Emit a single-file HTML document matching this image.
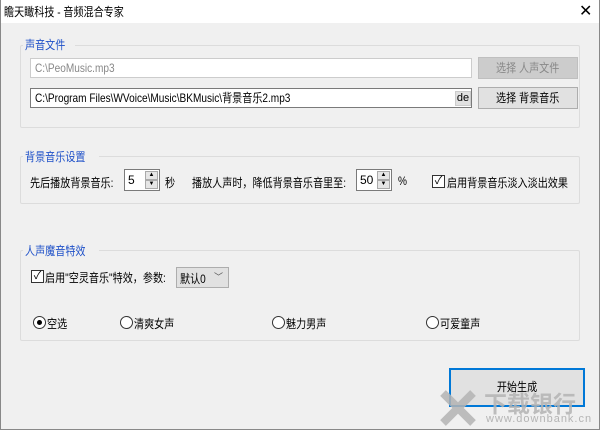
<!DOCTYPE html>
<html><head><meta charset="utf-8"><style>
*{margin:0;padding:0;box-sizing:border-box}
body{width:600px;height:430px;overflow:hidden;background:#f0f0f0;font-family:"Liberation Sans","Noto Sans CJK SC",sans-serif;font-size:12px;color:#000;position:relative}
.a{position:absolute}
.n{display:inline-block;transform:scaleX(.84);transform-origin:0 0;white-space:nowrap}
.win{left:0;top:0;width:600px;height:430px;border:1px solid #888;border-top:none}
.title{left:0;top:0;width:600px;height:23px;background:#fff;padding:3px 0 0 4px;font-size:12px}
.grp{border:1px solid #dcdcdc;border-radius:2px}
.leg{background:#f0f0f0;color:#1e50c8;padding:0 2px;font-size:12px;line-height:14px}
.inp{background:#fff;border:1px solid #a0a0a0;padding:2px 4px;line-height:14px;white-space:nowrap}
.btn{background:#e1e1e1;border:1px solid #adadad;text-align:center;line-height:20px}
.btn .n{transform-origin:50% 0}
.spin{background:#fff;border:1px solid #7a7a7a;}
.arr{position:absolute;right:1px;width:13px;height:9px;background:#e6e6e6;border:1px solid #aaa;font-size:6px;line-height:7px;text-align:center}
.chk{width:13px;height:13px;border:1px solid #333;background:#fff}
.rad{width:13px;height:13px;border:1px solid #333;border-radius:50%;background:#fff}
</style></head><body>
<div class="a title"><span class="n">瞻天瞰科技 - 音频混合专家</span></div>
<div class="a" style="left:579px;top:1px;font-size:16px">✕</div>
<div class="a win"></div>

<div class="a grp" style="left:20px;top:45px;width:560px;height:83px"></div>
<div class="a leg" style="left:23px;top:38px"><span class="n">声音文件</span></div>
<div class="a inp" style="left:30px;top:58px;width:442px;height:20px;color:#888;border-color:#ccc"><span class="n">C:\PeoMusic.mp3</span></div>
<div class="a btn" style="left:478px;top:57px;width:100px;height:22px;color:#888;background:#ccc;border-color:#bfbfbf"><span class="n">选择 人声文件</span></div>
<div class="a inp" style="left:30px;top:88px;width:442px;height:20px;border-color:#7a7a7a"><span class="n">C:\Program Files\WVoice\Music\BKMusic\背景音乐2.mp3</span></div>
<div class="a" style="left:455px;top:91px;width:16px;height:15px;background:#e1e1e1;border:1px solid #ccc;font-size:11px;text-align:center;line-height:13px">de</div>
<div class="a btn" style="left:478px;top:87px;width:100px;height:22px"><span class="n">选择 背景音乐</span></div>

<div class="a grp" style="left:20px;top:156px;width:560px;height:48px"></div>
<div class="a leg" style="left:23px;top:150px"><span class="n">背景音乐设置</span></div>
<div class="a" style="left:30px;top:174px"><span class="n">先后播放背景音乐:</span></div>
<div class="a spin" style="left:124px;top:169px;width:36px;height:22px"><span style="position:absolute;left:3px;top:3px">5</span><div class="arr" style="top:1px">▲</div><div class="arr" style="top:10px">▼</div></div>
<div class="a" style="left:165px;top:174px"><span class="n">秒</span></div>
<div class="a" style="left:192px;top:174px"><span class="n">播放人声时，降低背景音乐音里至:</span></div>
<div class="a spin" style="left:356px;top:169px;width:36px;height:22px"><span style="position:absolute;left:3px;top:3px">50</span><div class="arr" style="top:1px">▲</div><div class="arr" style="top:10px">▼</div></div>
<div class="a" style="left:398px;top:174px"><span class="n">%</span></div>
<div class="a chk" style="left:432px;top:175px;font-size:11px;line-height:11px;text-align:center">✓</div>
<div class="a" style="left:447px;top:174px"><span class="n">启用背景音乐淡入淡出效果</span></div>

<div class="a grp" style="left:20px;top:250px;width:560px;height:91px"></div>
<div class="a leg" style="left:23px;top:244px"><span class="n">人声魔音特效</span></div>
<div class="a chk" style="left:31px;top:270px;font-size:11px;line-height:11px;text-align:center">✓</div>
<div class="a" style="left:45px;top:269px"><span class="n">启用"空灵音乐"特效，参数:</span></div>
<div class="a" style="left:176px;top:267px;width:53px;height:21px;background:#e1e1e1;border:1px solid #adadad;padding:2px 3px"><span class="n">默认0</span><span style="position:absolute;right:5px;top:2px;font-size:9px;color:#555">﹀</span></div>
<div class="a rad" style="left:33px;top:316px"><div style="position:absolute;left:3px;top:3px;width:5px;height:5px;border-radius:50%;background:#000"></div></div>
<div class="a" style="left:47px;top:315px"><span class="n">空选</span></div>
<div class="a rad" style="left:120px;top:316px"></div><div class="a" style="left:134px;top:315px"><span class="n">清爽女声</span></div>
<div class="a rad" style="left:272px;top:316px"></div><div class="a" style="left:286px;top:315px"><span class="n">魅力男声</span></div>
<div class="a rad" style="left:426px;top:316px"></div><div class="a" style="left:440px;top:315px"><span class="n">可爱童声</span></div>

<div class="a btn" style="left:449px;top:368px;width:136px;height:39px;border:2px solid #0078d7;line-height:35px"><span class="n">开始生成</span></div>
<svg class="a" style="left:440px;top:390px" width="36" height="36"><path d="M3 3 L33 33 M33 3 L3 33" stroke="#b4b4b4" stroke-width="8" opacity=".85"/></svg>
<div class="a" style="left:484px;top:385px;font-size:23px;font-weight:bold;color:#b4b4b4;opacity:.85;letter-spacing:0px">下载银行</div>
<div class="a" style="left:486px;top:413px;font-size:11px;color:#b4b4b4;letter-spacing:1px">www.downbank.cn</div>
</body></html>
